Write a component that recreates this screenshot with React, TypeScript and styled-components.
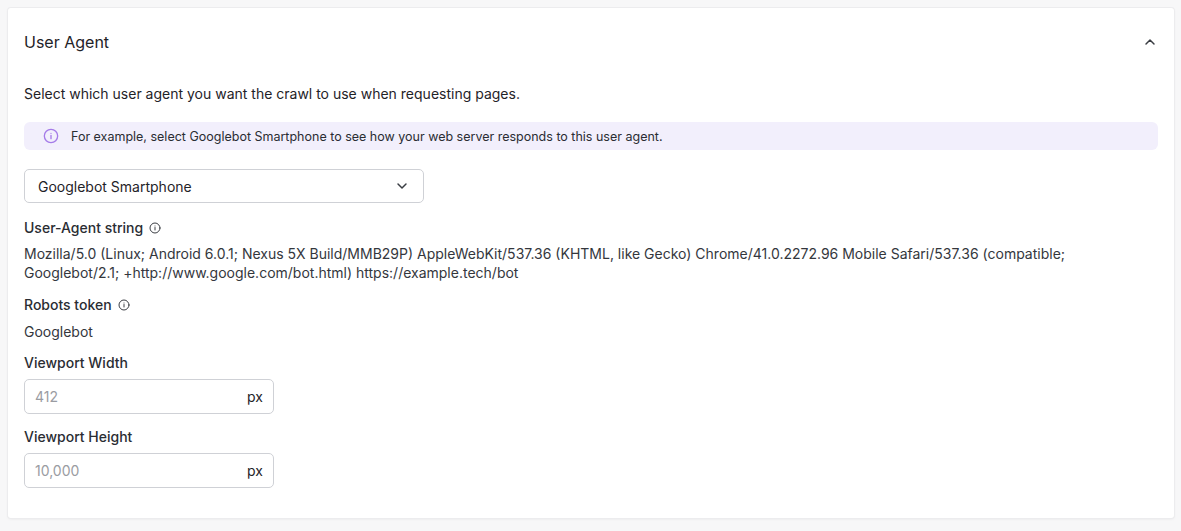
import React from "react";
import styled, { createGlobalStyle } from "styled-components";

const Global = createGlobalStyle`
  body { margin: 0; background: #f7f7f8; font-family: Inter, "Noto Sans", sans-serif; color: #1f2328; }
`;

const Page = styled.div`
  padding: 8px 7px 9px 8px;
`;

const Card = styled.div`
  background: #fff;
  border-radius: 3px;
  box-shadow: 0 0 0 1px #ececee, 0 1px 3px rgba(0, 0, 0, 0.08);
  padding: 0 16px 30px 16px;
`;

const Header = styled.div`
  height: 68px;
  display: flex;
  align-items: center;
  justify-content: space-between;
`;

const Title = styled.div`
  font-size: 16px;
  color: #1f2328;
`;

const Description = styled.div`
  font-size: 14px;
  line-height: 20px;
  margin-top: 8px;
`;

const Banner = styled.div`
  margin-top: 18px;
  height: 28px;
  border-radius: 6px;
  background: #f2effc;
  display: flex;
  align-items: center;
  gap: 12px;
  padding: 0 19px;
  font-size: 12.5px;
  color: #2a2d33;
`;

const Select = styled.div`
  margin-top: 19px;
  width: 400px;
  height: 34px;
  box-sizing: border-box;
  border: 1px solid #cfd1d6;
  border-radius: 5px;
  display: flex;
  align-items: center;
  justify-content: space-between;
  padding: 0 13px;
  font-size: 14px;
`;

const Label = styled.div<{ $top: number }>`
  margin-top: ${({ $top }) => $top}px;
  font-size: 14px;
  font-weight: 500;
  color: #2a2d33;
  line-height: 20px;
  display: flex;
  align-items: center;
  gap: 6px;
`;

const Value = styled.div<{ $top: number }>`
  margin-top: ${({ $top }) => $top}px;
  font-size: 14px;
  line-height: 19px;
  color: #34373d;
`;

const InputBox = styled.div`
  margin-top: 6px;
  width: 250px;
  height: 35px;
  box-sizing: border-box;
  border: 1px solid #cfd1d6;
  border-radius: 5px;
  display: flex;
  align-items: center;
  justify-content: space-between;
  padding: 0 10px;
  font-size: 14px;
`;

const Placeholder = styled.span`
  color: #9a9ca2;
`;

const Chevron = ({ up }: { up?: boolean }) => (
  <svg width="16" height="16" viewBox="0 0 24 24" fill="none" stroke="#3a3d43" strokeWidth="2.2" strokeLinecap="round" strokeLinejoin="round">
    <path d={up ? "M6 15l6-6 6 6" : "M6 9l6 6 6-6"} />
  </svg>
);

const Info = ({ size, color }: { size: number; color: string }) => (
  <svg width={size} height={size} viewBox="0 0 24 24" fill="none" stroke={color} strokeWidth="2" strokeLinecap="round">
    <circle cx="12" cy="12" r="10" />
    <path d="M12 16v-5M12 8h.01" />
  </svg>
);

export default function App() {
  return (
    <>
      <Global />
      <Page>
        <Card>
          <Header>
            <Title>User Agent</Title>
            <Chevron up />
          </Header>
          <Description>Select which user agent you want the crawl to use when requesting pages.</Description>
          <Banner>
            <Info size={16} color="#a57be8" />
            For example, select Googlebot Smartphone to see how your web server responds to this user agent.
          </Banner>
          <Select>
            Googlebot Smartphone
            <Chevron />
          </Select>
          <Label $top={15}>
            User-Agent string <Info size={12} color="#3a3d43" />
          </Label>
          <Value $top={6}>
            Mozilla/5.0 (Linux; Android 6.0.1; Nexus 5X Build/MMB29P) AppleWebKit/537.36 (KHTML, like Gecko) Chrome/41.0.2272.96 Mobile Safari/537.36 (compatible;
            <br />
            Googlebot/2.1; +http://www.google.com/bot.html) https://example.tech/bot
          </Value>
          <Label $top={13}>
            Robots token <Info size={12} color="#3a3d43" />
          </Label>
          <Value $top={7}>Googlebot</Value>
          <Label $top={12}>Viewport Width</Label>
          <InputBox>
            <Placeholder>412</Placeholder>px
          </InputBox>
          <Label $top={13}>Viewport Height</Label>
          <InputBox>
            <Placeholder>10,000</Placeholder>px
          </InputBox>
        </Card>
      </Page>
    </>
  );
}
